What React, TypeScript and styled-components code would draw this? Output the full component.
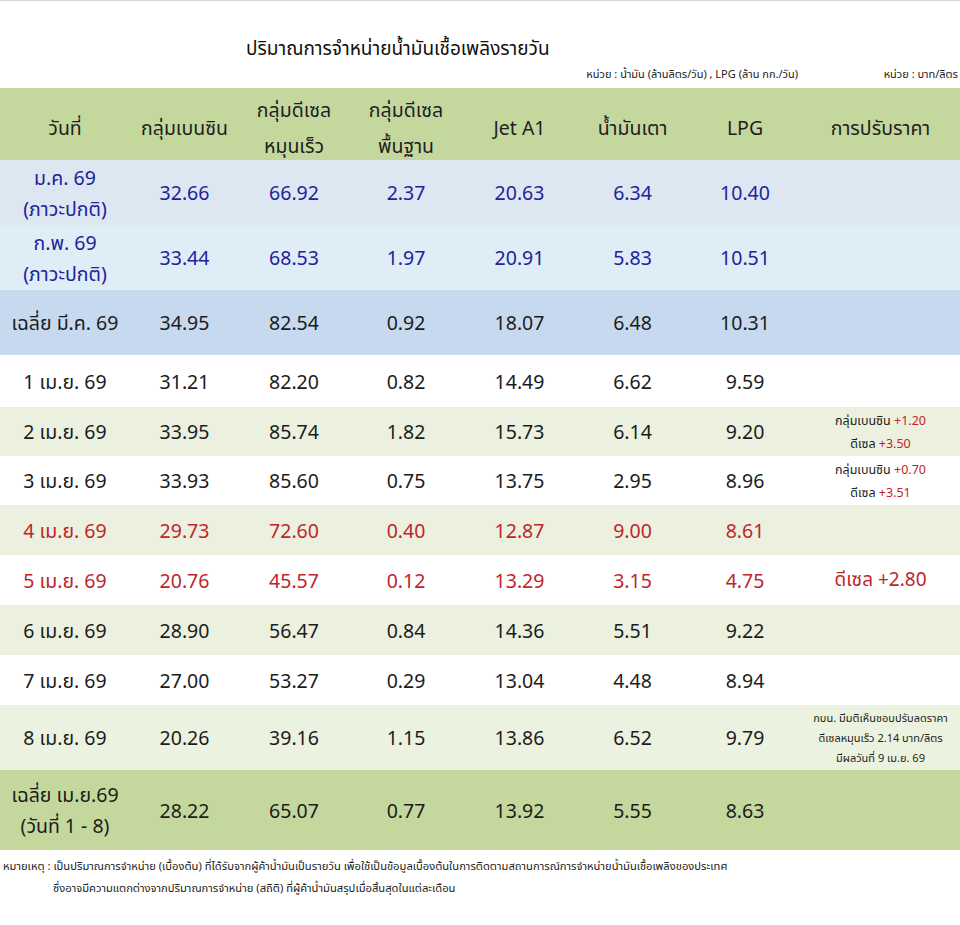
import styled, { createGlobalStyle } from 'styled-components'

const GlobalStyle = createGlobalStyle`
  html, body {
    margin: 0;
    padding: 0;
    background: #ffffff;
  }
  body {
    font-family: Tahoma, "Noto Sans", "Noto Sans Thai", "DejaVu Sans", sans-serif;
    color: #1a1a1a;
  }
`

const Page = styled.div`
  width: 960px;
  height: 925px;
  background: #ffffff;
  border-top: 1px solid #d8d8d8;
  box-sizing: border-box;
  overflow: hidden;
`

const Title = styled.h1`
  margin: 0;
  padding: 34px 0 0 246px;
  height: 26px;
  font-size: 19px;
  font-weight: 400;
  color: #111;
  line-height: 26px;
`

const UnitRow = styled.div`
  display: flex;
  justify-content: flex-end;
  align-items: center;
  height: 27px;
  font-size: 11px;
  color: #222;
`

const Unit = styled.span<{ $width: number }>`
  width: ${p => p.$width}px;
  text-align: right;
  padding-right: 2px;
  white-space: nowrap;
`

const Table = styled.table`
  width: 960px;
  border-collapse: collapse;
  table-layout: fixed;
`

const HeadRow = styled.tr`
  background: #c4d89e;
  height: 72px;
`

const HeadCell = styled.th`
  padding: 0;
  font-weight: 400;
`

const HeadLabel = styled.div`
  height: 72px;
  box-sizing: border-box;
  padding-top: 8px;
  display: flex;
  flex-direction: column;
  justify-content: center;
  align-items: center;
  font-size: 19.5px;
  line-height: 36px;
  color: #1e1e1e;
  white-space: nowrap;
`

type Tone = 'blue' | 'black' | 'red'
type Fill = 'jan' | 'feb' | 'mar' | 'white' | 'green' | 'pale' | 'avg'

const fills: Record<Fill, string> = {
  jan: '#dde7f2',
  feb: '#dfedf6',
  mar: '#c6d9ee',
  white: '#ffffff',
  green: '#ebf1de',
  pale: '#ecf2e0',
  avg: '#c4d89e',
}

const tones: Record<Tone, string> = {
  blue: '#22229a',
  black: '#1c1c1c',
  red: '#c0252c',
}

const Row = styled.tr<{ $fill: Fill; $height: number }>`
  background: ${p => fills[p.$fill]};
  height: ${p => p.$height}px;
`

const Cell = styled.td<{ $tone: Tone }>`
  color: ${p => tones[p.$tone]};
  font-size: 19.5px;
  line-height: 31px;
  text-align: center;
  vertical-align: middle;
  padding: 0;
  white-space: nowrap;
`

const NoteCell = styled.td`
  text-align: center;
  vertical-align: middle;
  padding: 0;
  font-size: 12.5px;
  line-height: 23px;
  color: #222;
  white-space: nowrap;
`

const Plus = styled.span`
  color: #c0252c;
`

const BigNote = styled.td`
  text-align: center;
  vertical-align: middle;
  padding: 0;
  font-size: 19px;
  color: #c0252c;
  white-space: nowrap;
`

const SmallNote = styled.td`
  text-align: center;
  vertical-align: middle;
  padding: 0;
  font-size: 11px;
  line-height: 20px;
  color: #222;
  white-space: nowrap;
`

const Footer = styled.div`
  padding: 5px 0 0 3px;
  font-size: 11.2px;
  line-height: 22px;
  color: #222;
  white-space: nowrap;
`

const FooterIndent = styled.div`
  padding-left: 50px;
`

type DataRow = {
  label: React.ReactNode
  values: string[]
  fill: Fill
  tone: Tone
  height: number
  note?: React.ReactNode
}

const rows: DataRow[] = [
  { label: <>ม.ค. 69<br />(ภาวะปกติ)</>, values: ['32.66', '66.92', '2.37', '20.63', '6.34', '10.40'], fill: 'jan', tone: 'blue', height: 65 },
  { label: <>ก.พ. 69<br />(ภาวะปกติ)</>, values: ['33.44', '68.53', '1.97', '20.91', '5.83', '10.51'], fill: 'feb', tone: 'blue', height: 65 },
  { label: 'เฉลี่ย มี.ค. 69', values: ['34.95', '82.54', '0.92', '18.07', '6.48', '10.31'], fill: 'mar', tone: 'black', height: 65 },
  { label: '1 เม.ย. 69', values: ['31.21', '82.20', '0.82', '14.49', '6.62', '9.59'], fill: 'white', tone: 'black', height: 52 },
  {
    label: '2 เม.ย. 69', values: ['33.95', '85.74', '1.82', '15.73', '6.14', '9.20'], fill: 'green', tone: 'black', height: 49,
    note: <NoteCell>กลุ่มเบนซิน <Plus>+1.20</Plus><br />ดีเซล <Plus>+3.50</Plus></NoteCell>,
  },
  {
    label: '3 เม.ย. 69', values: ['33.93', '85.60', '0.75', '13.75', '2.95', '8.96'], fill: 'white', tone: 'black', height: 49,
    note: <NoteCell>กลุ่มเบนซิน <Plus>+0.70</Plus><br />ดีเซล <Plus>+3.51</Plus></NoteCell>,
  },
  { label: '4 เม.ย. 69', values: ['29.73', '72.60', '0.40', '12.87', '9.00', '8.61'], fill: 'green', tone: 'red', height: 50 },
  {
    label: '5 เม.ย. 69', values: ['20.76', '45.57', '0.12', '13.29', '3.15', '4.75'], fill: 'white', tone: 'red', height: 50,
    note: <BigNote>ดีเซล +2.80</BigNote>,
  },
  { label: '6 เม.ย. 69', values: ['28.90', '56.47', '0.84', '14.36', '5.51', '9.22'], fill: 'green', tone: 'black', height: 50 },
  { label: '7 เม.ย. 69', values: ['27.00', '53.27', '0.29', '13.04', '4.48', '8.94'], fill: 'white', tone: 'black', height: 50 },
  {
    label: '8 เม.ย. 69', values: ['20.26', '39.16', '1.15', '13.86', '6.52', '9.79'], fill: 'pale', tone: 'black', height: 65,
    note: <SmallNote>กบน. มีมติเห็นชอบปรับลดราคา<br />ดีเซลหมุนเร็ว 2.14 บาท/ลิตร<br />มีผลวันที่ 9 เม.ย. 69</SmallNote>,
  },
  { label: <>เฉลี่ย เม.ย.69<br />(วันที่ 1 - 8)</>, values: ['28.22', '65.07', '0.77', '13.92', '5.55', '8.63'], fill: 'avg', tone: 'black', height: 80 },
]

const headers: React.ReactNode[] = [
  'วันที่',
  'กลุ่มเบนซิน',
  <>กลุ่มดีเซล<br />หมุนเร็ว</>,
  <>กลุ่มดีเซล<br />พื้นฐาน</>,
  'Jet A1',
  'น้ำมันเตา',
  'LPG',
  'การปรับราคา',
]

const widths = [130, 109, 110, 114, 113, 113, 112, 159]

export default function App() {
  return (
    <Page>
      <GlobalStyle />
      <Title>ปริมาณการจำหน่ายน้ำมันเชื้อเพลิงรายวัน</Title>
      <UnitRow>
        <Unit $width={300}>หน่วย : น้ำมัน (ล้านลิตร/วัน) , LPG (ล้าน กก./วัน)</Unit>
        <Unit $width={158}>หน่วย : บาท/ลิตร</Unit>
      </UnitRow>
      <Table>
        <colgroup>
          {widths.map((w, i) => <col key={i} style={{ width: w }} />)}
        </colgroup>
        <thead>
          <HeadRow>
            {headers.map((h, i) => (
              <HeadCell key={i}><HeadLabel>{h}</HeadLabel></HeadCell>
            ))}
          </HeadRow>
        </thead>
        <tbody>
          {rows.map((r, i) => (
            <Row key={i} $fill={r.fill} $height={r.height}>
              <Cell $tone={r.tone}>{r.label}</Cell>
              {r.values.map((v, j) => <Cell key={j} $tone={r.tone}>{v}</Cell>)}
              {r.note ?? <td />}
            </Row>
          ))}
        </tbody>
      </Table>
      <Footer>
        หมายเหตุ : เป็นปริมาณการจำหน่าย (เบื้องต้น) ที่ได้รับจากผู้ค้าน้ำมันเป็นรายวัน เพื่อใช้เป็นข้อมูลเบื้องต้นในการติดตามสถานการณ์การจำหน่ายน้ำมันเชื้อเพลิงของประเทศ
        <FooterIndent>ซึ่งอาจมีความแตกต่างจากปริมาณการจำหน่าย (สถิติ) ที่ผู้ค้าน้ำมันสรุปเมื่อสิ้นสุดในแต่ละเดือน</FooterIndent>
      </Footer>
    </Page>
  )
}
